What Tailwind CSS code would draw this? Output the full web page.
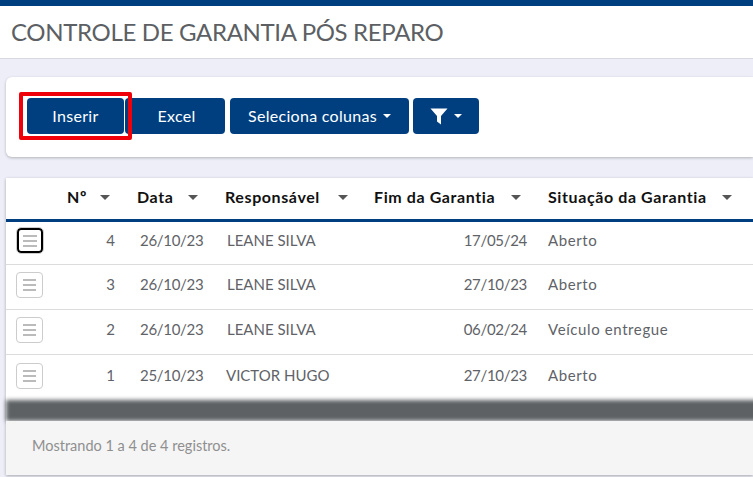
<!DOCTYPE html>
<html lang="pt-BR">
<head>
  <meta charset="UTF-8">
  <title>Controle de Garantia Pós Reparo</title>
  <script src="https://cdn.jsdelivr.net/npm/@tailwindcss/browser@4"></script>
</head>
<body class="bg-[#eeeef8] h-[477px] overflow-hidden font-['Lato','Noto_Sans',sans-serif] text-[#5f6368]">
  <div class="h-[6px] bg-[#003f7f]"></div>
  <header class="h-[53px] bg-white border-b border-[#d8d8e2] pl-[11px] pt-[9px]">
    <h1 class="text-[24px] tracking-[-0.34px] leading-[34px] text-[#5c5f63] whitespace-nowrap">CONTROLE DE GARANTIA PÓS REPARO</h1>
  </header>

  <!-- toolbar -->
  <section class="ml-[6px] mt-[18px] h-[80px] bg-white rounded-l-[6px] shadow-[0_1px_3px_rgba(0,0,0,0.25)] flex items-start pt-[21px] pl-[21px] text-white text-[16px] tracking-[0.3px]">
    <button class="relative w-[97px] h-[36px] bg-[#003f7f] rounded-[4px]">
      Inserir
      <span class="absolute -left-[8px] -top-[6px] w-[113px] h-[48px] border-4 border-[#f00008] rounded-[2px]"></span>
    </button>
    <button class="w-[100px] h-[36px] ml-[1px] pl-[3px] bg-[#003f7f] rounded-[4px]">Excel</button>
    <button class="w-[179px] h-[36px] ml-[5px] bg-[#003f7f] rounded-[4px] flex items-center justify-center gap-[6px]">
      Seleciona colunas
      <span class="w-0 h-0 border-x-[4px] border-x-transparent border-t-[4px] border-t-white"></span>
    </button>
    <button class="w-[66px] h-[36px] ml-[4px] bg-[#003f7f] rounded-[4px] flex items-center justify-center gap-[6px]">
      <svg width="18" height="17" viewBox="0 0 18 17"><path d="M0.5 0.5h17l-6.5 7.6v8.4l-4-2.9v-5.5z" fill="#fff"/></svg>
      <span class="w-0 h-0 border-x-[4px] border-x-transparent border-t-[4px] border-t-white"></span>
    </button>
  </section>

  <!-- tabela -->
  <section class="ml-[6px] mt-[21px] h-[297px] bg-white shadow-[0_1px_3px_rgba(0,0,0,0.3)] flex flex-col">
    <table class="w-[747px] table-fixed border-collapse text-[15px]">
      <colgroup>
        <col class="w-[47px]"><col class="w-[69px]"><col class="w-[88px]"><col class="w-[147px]"><col class="w-[175px]"><col>
      </colgroup>
      <thead>
        <tr class="h-[42px] border-b-[3px] border-[#003f7f] text-[#111] text-[16px] font-bold tracking-[0.6px] [&>th]:pb-[2px]">
          <th></th>
          <th class="pl-[14px] text-left"><span class="flex items-center justify-between pr-[12px]">Nº <i class="w-0 h-0 border-x-[5px] border-x-transparent border-t-[5px] border-t-[#555]"></i></span></th>
          <th class="pl-[15px] text-left"><span class="flex items-center justify-between pr-[12px]">Data <i class="w-0 h-0 border-x-[5px] border-x-transparent border-t-[5px] border-t-[#555]"></i></span></th>
          <th class="pl-[15px] text-left"><span class="flex items-center justify-between pr-[9px]">Responsável <i class="w-0 h-0 border-x-[5px] border-x-transparent border-t-[5px] border-t-[#555]"></i></span></th>
          <th class="pl-[17px] text-left"><span class="flex items-center justify-between pr-[11px] whitespace-nowrap">Fim da Garantia <i class="w-0 h-0 border-x-[5px] border-x-transparent border-t-[5px] border-t-[#555]"></i></span></th>
          <th class="pl-[16px] text-left"><span class="flex items-center justify-between pr-[21px] whitespace-nowrap">Situação da Garantia <i class="w-0 h-0 border-x-[5px] border-x-transparent border-t-[5px] border-t-[#555]"></i></span></th>
        </tr>
      </thead>
      <tbody>
        <tr class="h-[44px] border-b border-[#dcdcdc] [&>td]:pb-[4px]">
          <td class="pl-[11px]">
            <span class="flex flex-col justify-center gap-[3px] w-[26px] h-[25px] rounded-[4px] border-2 border-black outline outline-[#ccc] px-[4px]"><i class="h-[2px] bg-[#bbb]"></i><i class="h-[2px] bg-[#bbb]"></i><i class="h-[2px] bg-[#bbb]"></i></span>
          </td>
          <td class="text-right pr-[7px]">4</td>
          <td class="pl-[18px] tracking-[-0.3px]">26/10/23</td>
          <td class="pl-[17px]">LEANE SILVA</td>
          <td class="text-right pr-[5px] tracking-[-0.3px]">17/05/24</td>
          <td class="pl-[16px] tracking-[0.6px]">Aberto</td>
        </tr>
        <tr class="h-[45px] border-b border-[#dcdcdc] [&>td]:pb-[4px]">
          <td class="pl-[10px]">
            <span class="flex flex-col justify-center gap-[3px] w-[27px] h-[26px] rounded-[4px] border border-[#ccc] px-[6px]"><i class="h-[2px] bg-[#bbb]"></i><i class="h-[2px] bg-[#bbb]"></i><i class="h-[2px] bg-[#bbb]"></i></span>
          </td>
          <td class="text-right pr-[7px]">3</td>
          <td class="pl-[18px] tracking-[-0.3px]">26/10/23</td>
          <td class="pl-[17px]">LEANE SILVA</td>
          <td class="text-right pr-[5px] tracking-[-0.3px]">27/10/23</td>
          <td class="pl-[16px] tracking-[0.6px]">Aberto</td>
        </tr>
        <tr class="h-[45px] border-b border-[#dcdcdc] [&>td]:pb-[4px]">
          <td class="pl-[10px]">
            <span class="flex flex-col justify-center gap-[3px] w-[27px] h-[26px] rounded-[4px] border border-[#ccc] px-[6px]"><i class="h-[2px] bg-[#bbb]"></i><i class="h-[2px] bg-[#bbb]"></i><i class="h-[2px] bg-[#bbb]"></i></span>
          </td>
          <td class="text-right pr-[7px]">2</td>
          <td class="pl-[18px] tracking-[-0.3px]">26/10/23</td>
          <td class="pl-[17px]">LEANE SILVA</td>
          <td class="text-right pr-[5px] tracking-[-0.3px]">06/02/24</td>
          <td class="pl-[16px] tracking-[0.6px]">Veículo entregue</td>
        </tr>
        <tr class="h-[46px] [&>td]:pb-[5px]">
          <td class="pl-[10px]">
            <span class="flex flex-col justify-center gap-[3px] w-[27px] h-[26px] mt-[2px] rounded-[4px] border border-[#ccc] px-[6px]"><i class="h-[2px] bg-[#bbb]"></i><i class="h-[2px] bg-[#bbb]"></i><i class="h-[2px] bg-[#bbb]"></i></span>
          </td>
          <td class="text-right pr-[7px]">1</td>
          <td class="pl-[18px] tracking-[-0.3px]">25/10/23</td>
          <td class="pl-[16px]">VICTOR HUGO</td>
          <td class="text-right pr-[5px] tracking-[-0.3px]">27/10/23</td>
          <td class="pl-[16px] tracking-[0.6px]">Aberto</td>
        </tr>
      </tbody>
    </table>
    <div class="w-[770px] h-[21px] bg-[#5d6164] blur-[2px] shrink-0"></div>
    <footer class="flex-1 bg-[#f5f5f5] pl-[26px] pt-[14px] text-[14.5px] text-[#8f8f8f] relative">Mostrando 1 a 4 de 4 registros.</footer>
  </section>
</body>
</html>
